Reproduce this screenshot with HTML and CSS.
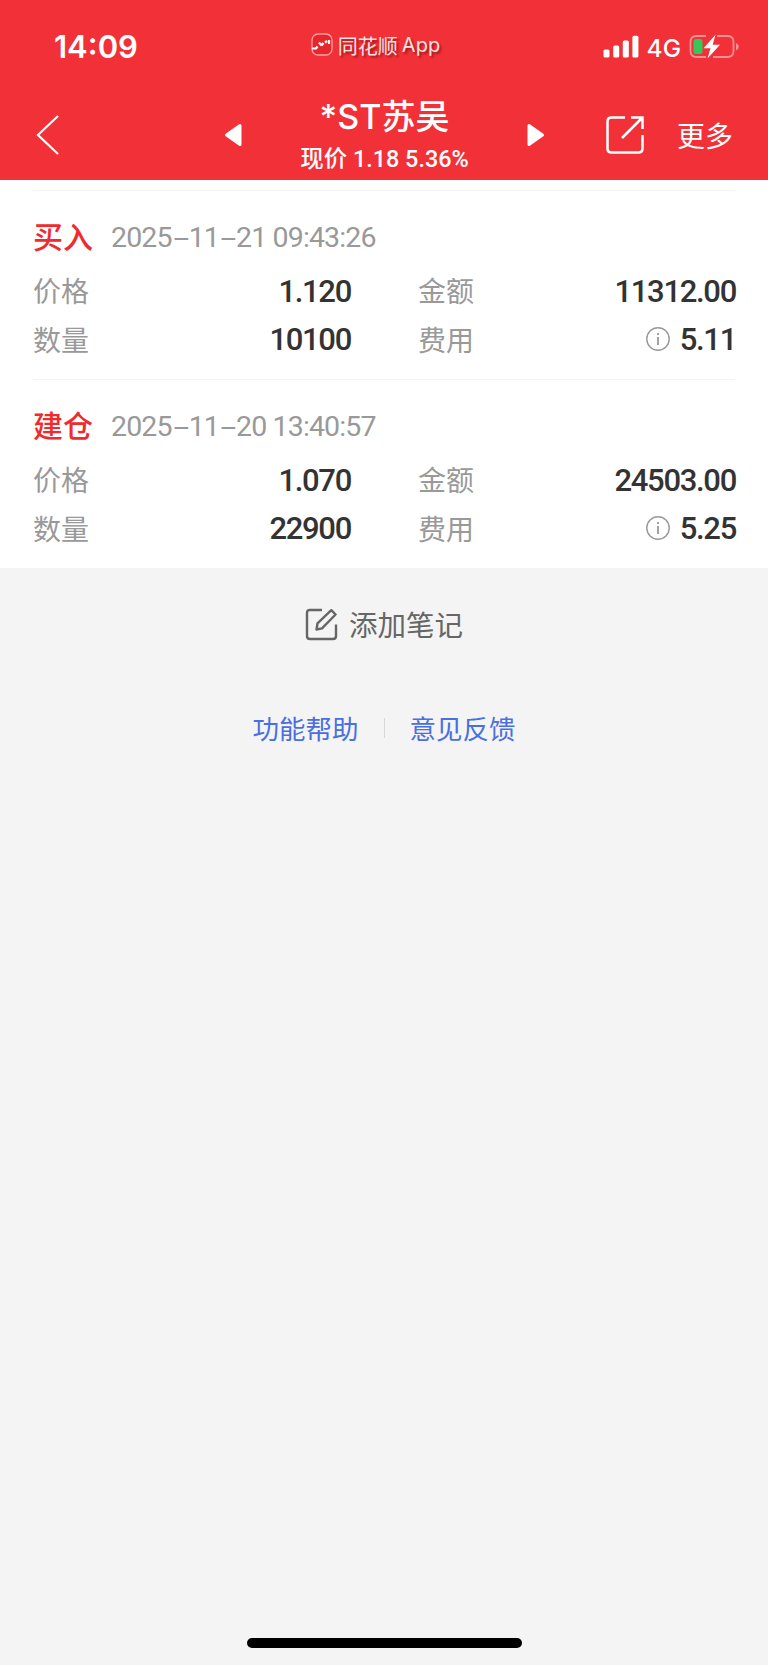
FILE: index.html
```html
<!DOCTYPE html>
<html lang="zh-CN">
<head>
  <meta charset="UTF-8">
  <meta name="viewport" content="width=device-width, initial-scale=1.0">
  <title>*ST苏吴</title>
  <link rel="stylesheet" href="styles.css">
</head>
<body>
  <div class="page">
    <header class="header">
      <div class="status-bar">
        <div class="time">14:09</div>
        <div class="app-name">
          <svg class="app-logo" width="22" height="23" viewBox="0 0 22 23">
            <rect x="1" y="1" width="20" height="21" rx="6" fill="#e5272d" stroke="#ffa0a0" stroke-width="1.3"/>
            <path d="M1 15.500h4l1.500-2M8 9.500l2.500 3M10.500 12.500l2-2.500M14 9.500l2-1.500M18 7v4" fill="none" stroke="#fff" stroke-width="2.200"/>
          </svg>
          <span>同花顺</span><span class="app-en">App</span>
        </div>
        <div class="signals">
          <svg width="36" height="24" viewBox="0 0 36 24" fill="#fff">
            <rect x="0.500" y="14.500" width="6" height="8" rx="1.500"/>
            <rect x="10.200" y="10.500" width="6" height="12" rx="1.500"/>
            <rect x="19.800" y="5.500" width="6" height="17" rx="1.500"/>
            <rect x="29.400" y="0.800" width="6" height="21.700" rx="1.500"/>
          </svg>
          <span class="network">4G</span>
          <svg width="50" height="26" viewBox="0 0 50 26">
            <path d="M17 2H7.500Q1.500 2 1.500 8v9q0 6 6 6H17M24 23h14.500q6 0 6-6V8q0-6-6-6H28" fill="none" stroke="#fa9196" stroke-width="1.800"/>
            <path d="M47 9v7.500q2.800-1.300 2.800-3.800T47 9z" fill="#fa9196"/>
            <rect x="4.500" y="5" width="9" height="15" rx="2.500" fill="#34c759"/>
            <path d="M26.500 0.800L14.500 14.300h7L18.500 24.500 31 10.800h-7.300z" fill="#fff"/>
          </svg>
        </div>
      </div>
      <div class="nav">
        <div class="nav-side">
          <svg width="24" height="42" viewBox="0 0 24 42">
            <path d="M22 2L2 21l20 19" fill="none" stroke="#fff" stroke-width="2.200"/>
          </svg>
        </div>
        <div class="stock">
          <svg width="18" height="24" viewBox="0 0 18 24">
            <path d="M16 2.500v19L2.500 12z" fill="#fff" stroke="#fff" stroke-width="3" stroke-linejoin="round"/>
          </svg>
          <div class="stock-info">
            <h1>*ST苏吴</h1>
            <p>现价 <span>1.18 5.36%</span></p>
          </div>
          <svg width="18" height="24" viewBox="0 0 18 24">
            <path d="M2 2.500v19L15.500 12z" fill="#fff" stroke="#fff" stroke-width="3" stroke-linejoin="round"/>
          </svg>
        </div>
        <div class="nav-side actions">
          <svg width="38" height="38" viewBox="0 0 38 38" fill="none" stroke="#fff" stroke-width="2.500">
            <path d="M19 1.500H5.500q-4 0-4 4v27q0 4 4 4h27q4 0 4-4V19"/>
            <path d="M25 1.500h11.500V13M36.500 1.500L16 22"/>
          </svg>
          <span>更多</span>
        </div>
      </div>
    </header>

    <main class="records">
      <section class="record">
        <div class="record-head">
          <span class="type">买入</span>
          <span class="date">2025<i>-</i>11<i>-</i>21 09:43:26</span>
        </div>
        <div class="record-grid">
          <div class="cell"><span>价格</span><b>1.120</b></div>
          <div class="cell"><span>金额</span><b>11312.00</b></div>
          <div class="cell"><span>数量</span><b>10100</b></div>
          <div class="cell">
            <span>费用</span>
            <svg class="info" width="24" height="24" viewBox="0 0 24 24">
              <circle cx="12" cy="12" r="11.200" fill="none" stroke="#999" stroke-width="1.400"/>
              <path d="M12 6v2M12 10v8" stroke="#999" stroke-width="1.800"/>
            </svg>
            <b>5.11</b>
          </div>
        </div>
      </section>
      <section class="record">
        <div class="record-head">
          <span class="type">建仓</span>
          <span class="date">2025<i>-</i>11<i>-</i>20 13:40:57</span>
        </div>
        <div class="record-grid">
          <div class="cell"><span>价格</span><b>1.070</b></div>
          <div class="cell"><span>金额</span><b>24503.00</b></div>
          <div class="cell"><span>数量</span><b>22900</b></div>
          <div class="cell">
            <span>费用</span>
            <svg class="info" width="24" height="24" viewBox="0 0 24 24">
              <circle cx="12" cy="12" r="11.200" fill="none" stroke="#999" stroke-width="1.400"/>
              <path d="M12 6v2M12 10v8" stroke="#999" stroke-width="1.800"/>
            </svg>
            <b>5.25</b>
          </div>
        </div>
      </section>
    </main>

    <div class="add-note">
      <svg width="33" height="33" viewBox="0 0 33 33" fill="none" stroke="#666" stroke-width="2.400">
        <path d="M17 2H5Q2 2 2 5v23q0 3 3 3h23q3 0 3-3V16.500"/>
        <path d="M11.500 21.500l1-6.200L26.300 2.200l4.300 4.300L17 20.300z" stroke-linejoin="round"/>
      </svg>
      <span>添加笔记</span>
    </div>

    <div class="links">
      <a>功能帮助</a>
      <a>意见反馈</a>
    </div>

    <div class="home-bar"></div>
  </div>
</body>
</html>
```
FILE: styles.css
```css
* {
  box-sizing: border-box;
}
body {
  margin: 0;
  font-family: "Noto Sans CJK SC", sans-serif;
  background-color: #f4f4f4;
}
svg {
  display: block;
  flex: none;
}
.page {
  display: flex;
  flex-direction: column;
  height: 1665px;
}

/* Header */
.header {
  height: 180px;
  background-color: #f23037;
  color: #fff;
}
.status-bar {
  display: grid;
  grid-template-columns: 1fr auto 1fr;
  align-items: center;
  height: 94px;
  padding: 0 29px 0 54px;
}
.time {
  font: 600 31px/36px Inter, sans-serif;
}
.app-name {
  display: flex;
  align-items: center;
  height: 40px;
  margin: 0 0 4px -42px;
  font-size: 20px;
  color: #ffe3e3;
  text-shadow: 2px 2px 2px rgba(90, 0, 0, 0.5);
}
.app-logo {
  margin: -2px 5px 0 0;
}
.app-en {
  margin-left: 4px;
  font-family: Inter, sans-serif;
}
.signals {
  display: flex;
  align-items: center;
  justify-content: flex-end;
}
.network {
  margin: 2px 8px 0 8px;
  font: 500 24.5px/28px Inter, sans-serif;
}
.nav {
  display: flex;
  justify-content: space-between;
  height: 86px;
  padding: 0 35px 0 36px;
}
.nav-side {
  display: flex;
  align-items: center;
  width: 130px;
  height: 82px;
}
.actions {
  justify-content: flex-end;
  gap: 33px;
  font-size: 28px;
}
.stock {
  display: flex;
  align-items: center;
  justify-content: space-between;
  width: 321px;
  height: 82px;
}
.stock-info {
  height: 82px;
  text-align: center;
  white-space: nowrap;
}
.stock-info h1 {
  margin: 0;
  font: 500 34px/45px Inter, "Noto Sans CJK SC", sans-serif;
}
.stock-info p {
  margin: 2px 0 0;
  font: 500 23.4px/37px Roboto, "Noto Sans CJK SC", sans-serif;
}

/* Trade records */
.records {
  height: 388px;
  padding: 10px 33px 0;
  background-color: #fff;
}
.record {
  height: 189px;
  padding-top: 19px;
  border-top: 1px solid #f3f3f3;
}
.record-head {
  display: flex;
  align-items: center;
  height: 54px;
}
.type {
  width: 78px;
  padding-bottom: 4px;
  font-size: 30px;
  font-weight: 500;
  line-height: 50px;
  color: #f02b2f;
}
.date {
  font-family: Roboto, sans-serif;
  font-size: 28.5px;
  letter-spacing: -0.85px;
  color: #999;
}
.date i {
  display: inline-block;
  width: 17px;
  font-style: normal;
  text-align: center;
  transform: scaleX(2);
}
.record-grid {
  display: grid;
  grid-template-columns: 318px 318px;
  grid-auto-rows: 48.5px;
  column-gap: 67px;
  padding-top: 2px;
}
.cell {
  display: flex;
  align-items: center;
  font-size: 28px;
  color: #999;
}
.cell b {
  margin-left: auto;
  padding-top: 2px;
  font-family: Roboto, sans-serif;
  font-size: 31px;
  font-weight: 500;
  letter-spacing: -1.3px;
  color: #333;
}
.info {
  margin-left: auto;
}
.info + b {
  margin-left: 10px;
}

/* Footer */
.add-note {
  display: flex;
  align-items: center;
  justify-content: center;
  gap: 11px;
  height: 113px;
  font-size: 28.5px;
  color: #666;
}
.add-note span {
  padding-bottom: 2px;
}
.links {
  display: flex;
  align-items: center;
  justify-content: center;
  height: 94px;
  font-size: 26.5px;
  color: #4a6fe0;
}
.links a {
  padding: 0 25px;
  line-height: 20px;
}
.links a + a {
  border-left: 1px solid #d8d8d8;
}
.home-bar {
  width: 275px;
  height: 10px;
  margin: auto auto 17px;
  border-radius: 5px;
  background-color: #000;
}
```
